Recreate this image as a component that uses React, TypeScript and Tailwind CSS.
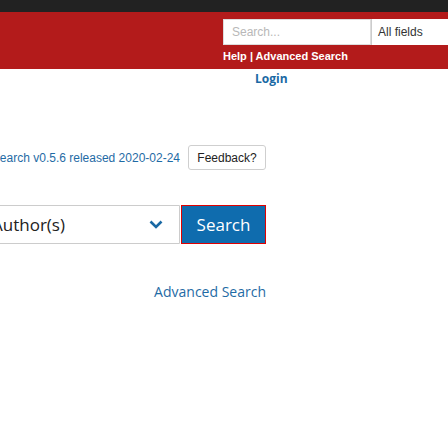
export default function App() {
  return (
    <div className="w-[448px] h-[448px] overflow-hidden bg-white font-['Open_Sans',sans-serif]">
      {/* top dark strip */}
      <div className="h-3 bg-[#222222]" />

      {/* red header with search box */}
      <header className="h-[57px] bg-[#b31b1b] pl-[223px] pt-[7px]">
        <div className="flex h-[26px]">
          <div className="w-[148px] bg-white border border-[#dddddd] flex items-center pl-2 text-[12px] text-[#b8b8b8] font-['Liberation_Sans',sans-serif]">
            Search...
          </div>
          <div className="flex-1 bg-white border-l border-[#cccccc] flex items-center pl-[6px] text-[12px] text-[#333333] font-['Liberation_Sans',sans-serif]">
            All fields
          </div>
        </div>
        <p className="mt-[4px] text-[11px] font-bold text-white leading-[14px] font-['Liberation_Sans',sans-serif]">
          Help | Advanced Search
        </p>
      </header>

      <div className="pl-[255px] pt-[1px]">
        <a className="block text-[12px] font-bold text-[#1a69a4] leading-[18px]">Login</a>
      </div>

      {/* main search area, right edge at 266px */}
      <div className="flex justify-end pr-[182px] pt-[57px]">
        <div className="flex flex-col items-end">
          <div className="flex items-center gap-2 whitespace-nowrap">
            <span className="text-[12px] text-[#1f6ba5] font-['Liberation_Sans',sans-serif]">
              Search v0.5.6 released 2020-02-24
            </span>
            <button className="h-[25px] w-[78px] border border-[#cfcfcf] rounded-[3px] bg-white text-[12px] text-[#222222] font-['Liberation_Sans',sans-serif]">
              Feedback?
            </button>
          </div>

          <div className="flex mt-[35px] h-[39px]">
            <div className="w-[230px] border border-[#cccccc] rounded-l-[3px] flex items-center justify-between pl-[41px] pr-[16px] text-[17px] text-[#222222]">
              <span>Author(s)</span>
              <svg width="14" height="9" viewBox="0 0 14 9" fill="none">
                <path d="M1.5 1.5 L7 7 L12.5 1.5" stroke="#1a69a4" strokeWidth="2.6" />
              </svg>
            </div>
            <button className="w-[85px] ml-[1px] bg-[#0f6cae] border border-[#e00000] text-white text-[17px] flex items-center justify-center">
              Search
            </button>
          </div>

          <a className="mt-[38px] text-[14px] text-[#1f6ba5] leading-[20px]">Advanced Search</a>
        </div>
      </div>
    </div>
  );
}
